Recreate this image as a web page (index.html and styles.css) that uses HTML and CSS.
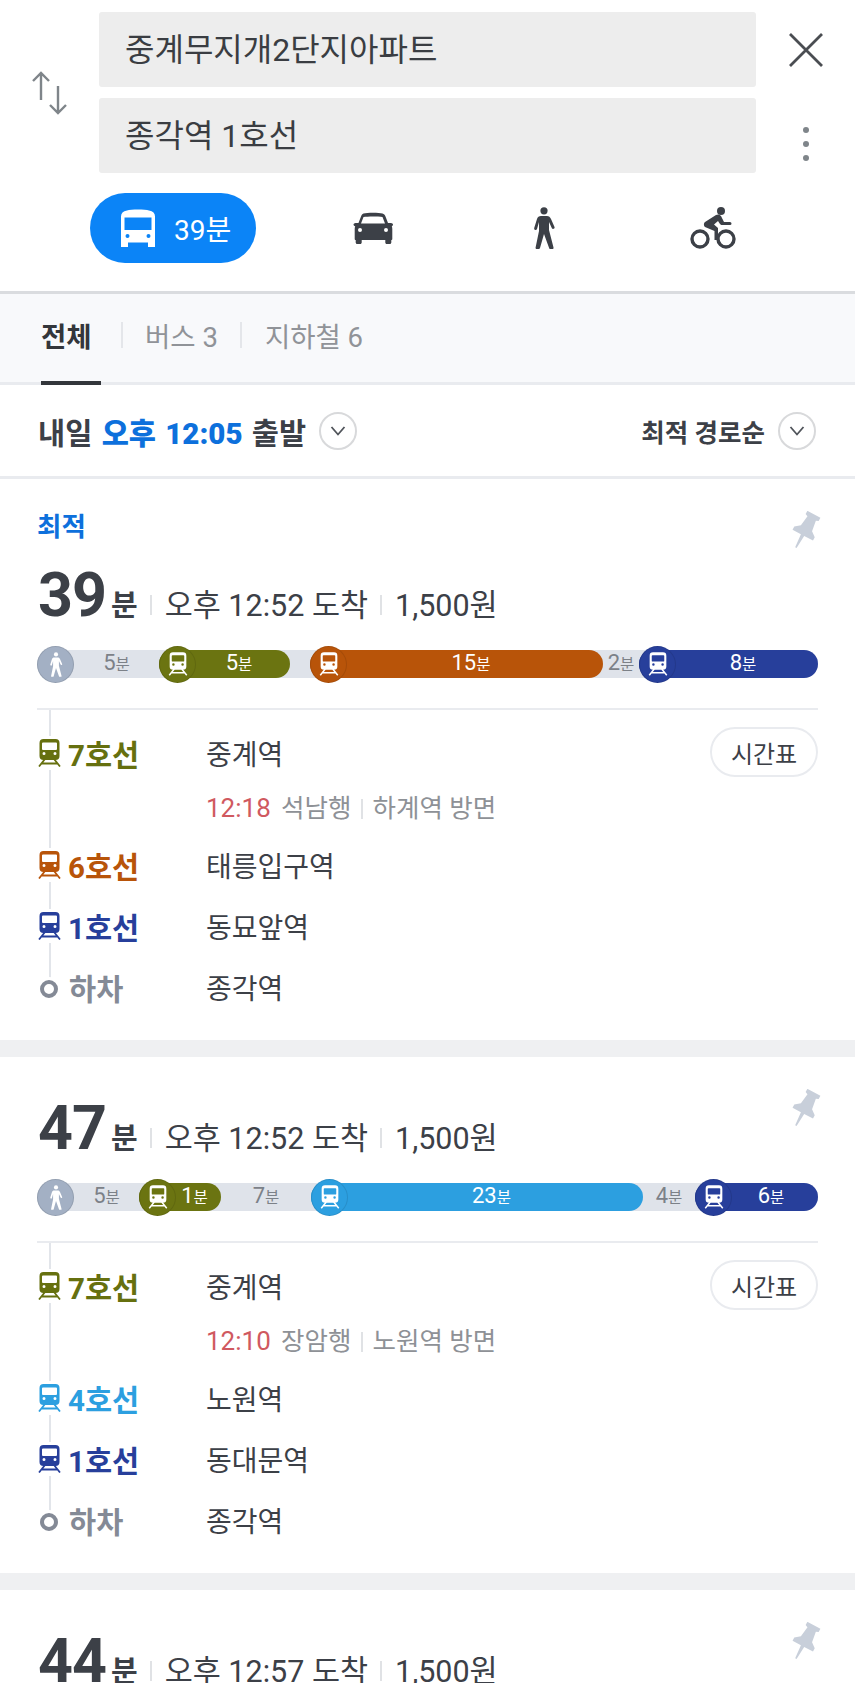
FILE: index.html
```html
<!DOCTYPE html>
<html lang="ko">
<head>
<meta charset="utf-8">
<title>길찾기</title>
<link rel="stylesheet" href="styles.css">
</head>
<body>
<svg class="defs" width="0" height="0" aria-hidden="true">
  <symbol id="train" viewBox="0 0 24 28">
    <path fill="currentColor" fill-rule="evenodd" d="M6 0h12a4 4 0 0 1 4 4v13a4 4 0 0 1-4 4H6a4 4 0 0 1-4-4V4a4 4 0 0 1 4-4zM5.500 3.500a1 1 0 0 0-1 1V10a1 1 0 0 0 1 1h13a1 1 0 0 0 1-1V4.500a1 1 0 0 0-1-1zM6.500 13a1.500 1.500 0 1 0 0 3 1.500 1.500 0 0 0 0-3zM17.500 13a1.500 1.500 0 1 0 0 3 1.500 1.500 0 0 0 0-3z"/>
    <path fill="none" stroke="currentColor" stroke-width="1.800" d="M7.500 20 1.500 27.500M16.500 20l6 7.500M4.500 24.500h15"/>
  </symbol>
  <symbol id="walk" viewBox="0 0 24 42">
    <circle cx="12" cy="3.800" r="3.600" fill="currentColor"/>
    <path fill="currentColor" d="M9 9h6c2 0 3 1 4 3l3.500 8c.3.800 0 1.500-.8 1.800s-1.500 0-1.800-.6L17 15v8l4.500 17.500c.2 1-.3 1.500-1.200 1.500h-2c-.7 0-1-.3-1.200-1L12 27 8 41c-.2.700-.6 1-1.200 1h-2c-1 0-1.400-.6-1.200-1.500L7 24v-9l-2 7c-.3.800-1 1.100-1.800.9S2 22 2.200 21L5 12c.5-2 2-3 4-3z"/>
  </symbol>
  <symbol id="pin" viewBox="0 0 30 38">
    <path fill="currentColor" transform="rotate(28 15 19)" d="M8 1h14v3.500l-2.500 1L21 16l5 4v3.500H16.500L15.500 37h-1.500L13 23.500H4V20l5-4 1.500-10.500L8 4.500z"/>
  </symbol>
  <symbol id="chev" viewBox="0 0 16 10">
    <path fill="none" stroke="currentColor" stroke-width="1.800" d="M1.500 1 8 8.500 14.500 1"/>
  </symbol>
</svg>

<header class="top">
  <div class="search">
    <div class="swap">
      <svg class="swap-icon" viewBox="0 0 37 44"><path fill="none" stroke="currentColor" stroke-width="2.400" d="M10 29V2M2 10l8-8 8 8M27 15v27M19 34l8 8 8-8"/></svg>
    </div>
    <div class="fields">
      <div class="field">중계무지개2단지아파트</div>
      <div class="field">종각역 1호선</div>
    </div>
    <div class="actions">
      <div class="action">
        <svg class="close-icon" viewBox="0 0 34 34"><path fill="none" stroke="currentColor" stroke-width="2.800" d="M1 1l32 32M33 1 1 33"/></svg>
      </div>
      <div class="action action-more">
        <svg class="more-icon" viewBox="0 0 8 36"><circle cx="4" cy="4" r="3" /><circle cx="4" cy="18" r="3"/><circle cx="4" cy="32" r="3"/></svg>
      </div>
    </div>
  </div>
  <div class="modes">
    <div class="mode-pill">
      <svg class="bus-icon" viewBox="0 0 34 38"><path fill="currentColor" fill-rule="evenodd" d="M6 1.500C10 .3 24 .3 28 1.500c4 .6 6 2.500 6 6V38h-7v-4.500H7V38H0V7.500c0-3.500 2-5.400 6-6zM3.500 8.500V21h27V8.500zM6.500 25a2 2 0 1 0 0 4 2 2 0 0 0 0-4zM27.500 25a2 2 0 1 0 0 4 2 2 0 0 0 0-4z"/></svg>
      <span>39분</span>
    </div>
    <svg class="mode-car" viewBox="0 0 40 32"><path fill="currentColor" fill-rule="evenodd" d="M10.500 1.500C14 .5 26 .5 29.500 1.500c1.500.4 2.300 1.400 2.900 2.800L35 11h3c1 0 2 .8 2 1.600 0 .8-.5 1.400-1.200 1.600.3.800.5 1.800.5 2.800v10c0 .7-.5 1-1 1v2.500c0 .8-.6 1.500-1.500 1.500h-3c-.9 0-1.500-.7-1.500-1.500V28H8.700v2.500c0 .8-.6 1.500-1.500 1.500h-3c-.9 0-1.500-.7-1.500-1.500V28c-.5 0-1-.3-1-1V17c0-1 .2-2 .5-2.800C1 14 .5 13.400.5 12.600c0-.8 1-1.600 2-1.600h3l2.600-6.700c.6-1.400 1.100-2.400 2.400-2.800zM10.500 5 8 11.500h24L29.500 5c-4-.8-15-.8-19 0zM7 16a2 2 0 1 0 0 4 2 2 0 0 0 0-4zM33 16a2 2 0 1 0 0 4 2 2 0 0 0 0-4z"/></svg>
    <svg class="mode-walk"><use href="#walk"/></svg>
    <svg class="mode-bike" viewBox="0 0 46 42"><circle cx="10" cy="32" r="8" fill="none" stroke="currentColor" stroke-width="3.400"/><circle cx="36" cy="32" r="8" fill="none" stroke="currentColor" stroke-width="3.400"/><circle cx="31" cy="4" r="4" fill="currentColor"/><path fill="currentColor" d="M15 15 26 8c2-1 4-.5 5 1l3 6h6a1.500 1.500 0 0 1 0 3h-8c-1 0-1.500-.5-2-1l-2-3-4 3.500 4 3.500v12h-3.500v-9L15 20c-1.500-1-1.500-4 0-5z"/></svg>
  </div>
</header>

<nav class="tabs">
  <div class="tab tab-active">전체</div>
  <i class="tab-sep"></i>
  <div class="tab">버스 3</div>
  <i class="tab-sep"></i>
  <div class="tab">지하철 6</div>
</nav>

<section class="filter">
  <div class="filter-item">
    <span class="depart">내일 <b>오후 12:05</b> 출발</span>
    <span class="chev"><svg><use href="#chev"/></svg></span>
  </div>
  <div class="filter-item">
    <span class="sort">최적 경로순</span>
    <span class="chev"><svg><use href="#chev"/></svg></span>
  </div>
</section>

<article class="card card-best">
  <svg class="pin"><use href="#pin"/></svg>
  <div class="tag">최적</div>
  <div class="summary">
    <span class="mins">39</span><span class="mins-unit">분</span><i class="sep"></i><span>오후 12:52 도착</span><i class="sep"></i><span>1,500원</span>
  </div>
  <div class="bar">
    <div class="seg seg-walk" style="width:122px"><span class="dot dot-walk"><svg class="dot-man"><use href="#walk"/></svg></span><span class="time">5<small>분</small></span></div>
    <div class="seg seg-line l7" style="width:131px"><span class="dot"><svg><use href="#train"/></svg></span><span class="time">5<small>분</small></span></div>
    <div class="seg seg-gap" style="width:20px"></div>
    <div class="seg seg-line l6" style="width:293px"><span class="dot"><svg><use href="#train"/></svg></span><span class="time">15<small>분</small></span></div>
    <div class="seg seg-gap" style="width:36px"><span class="time">2<small>분</small></span></div>
    <div class="seg seg-line l1" style="width:179px"><span class="dot"><svg><use href="#train"/></svg></span><span class="time">8<small>분</small></span></div>
  </div>
  <div class="stops">
    <div class="stop"><div class="line l7t"><svg class="line-icon"><use href="#train"/></svg>7호선</div><div class="station">중계역</div><a class="timetable">시간표</a></div>
    <div class="next"><span class="next-time">12:18</span> 석남행<i class="sep sep-small"></i>하계역 방면</div>
    <div class="stop"><div class="line l6t"><svg class="line-icon"><use href="#train"/></svg>6호선</div><div class="station">태릉입구역</div></div>
    <div class="stop"><div class="line l1t"><svg class="line-icon"><use href="#train"/></svg>1호선</div><div class="station">동묘앞역</div></div>
    <div class="stop"><div class="line lend"><span class="end-ring"></span>하차</div><div class="station">종각역</div></div>
  </div>
</article>

<article class="card">
  <svg class="pin"><use href="#pin"/></svg>
  <div class="summary">
    <span class="mins">47</span><span class="mins-unit">분</span><i class="sep"></i><span>오후 12:52 도착</span><i class="sep"></i><span>1,500원</span>
  </div>
  <div class="bar">
    <div class="seg seg-walk" style="width:102px"><span class="dot dot-walk"><svg class="dot-man"><use href="#walk"/></svg></span><span class="time">5<small>분</small></span></div>
    <div class="seg seg-line l7" style="width:82px"><span class="dot"><svg><use href="#train"/></svg></span><span class="time">1<small>분</small></span></div>
    <div class="seg seg-gap" style="width:90px"><span class="time">7<small>분</small></span></div>
    <div class="seg seg-line l4" style="width:332px"><span class="dot"><svg><use href="#train"/></svg></span><span class="time">23<small>분</small></span></div>
    <div class="seg seg-gap" style="width:52px"><span class="time">4<small>분</small></span></div>
    <div class="seg seg-line l1" style="width:123px"><span class="dot"><svg><use href="#train"/></svg></span><span class="time">6<small>분</small></span></div>
  </div>
  <div class="stops">
    <div class="stop"><div class="line l7t"><svg class="line-icon"><use href="#train"/></svg>7호선</div><div class="station">중계역</div><a class="timetable">시간표</a></div>
    <div class="next"><span class="next-time">12:10</span> 장암행<i class="sep sep-small"></i>노원역 방면</div>
    <div class="stop"><div class="line l4t"><svg class="line-icon"><use href="#train"/></svg>4호선</div><div class="station">노원역</div></div>
    <div class="stop"><div class="line l1t"><svg class="line-icon"><use href="#train"/></svg>1호선</div><div class="station">동대문역</div></div>
    <div class="stop"><div class="line lend"><span class="end-ring"></span>하차</div><div class="station">종각역</div></div>
  </div>
</article>

<article class="card">
  <svg class="pin"><use href="#pin"/></svg>
  <div class="summary">
    <span class="mins">44</span><span class="mins-unit">분</span><i class="sep"></i><span>오후 12:57 도착</span><i class="sep"></i><span>1,500원</span>
  </div>
</article>
</body>
</html>
```

FILE: styles.css
```css
* { box-sizing: border-box; }
html, body { margin: 0; height: 100%; overflow: hidden; background: #fff; }
body {
  font-family: Roboto, "Noto Sans CJK KR", sans-serif;
  color: #3c4047;
}
.defs { position: absolute; }
i { font-style: normal; }

/* search header */
.top { padding-top: 12px; border-bottom: 3px solid #dadcdf; padding-bottom: 28px; }
.search { display: grid; grid-template-columns: 99px 657px 1fr; }
.swap { display: flex; align-items: center; justify-content: center; color: #7f858a; }
.swap-icon { width: 37px; height: 44px; }
.fields { display: flex; flex-direction: column; gap: 11px; }
.field {
  height: 75px;
  background: #ededed;
  border-radius: 3px;
  padding: 0 0 5px 26px;
  display: flex;
  align-items: center;
  font-size: 32px;
  color: #3a3d42;
}
.actions { display: flex; flex-direction: column; gap: 11px; }
.action { height: 75px; display: flex; align-items: center; justify-content: center; color: #4a4d52; }
.action-more { padding-top: 16px; }
.close-icon { width: 34px; height: 34px; }
.more-icon { width: 8px; height: 36px; fill: #7f858a; }

.modes { display: flex; align-items: center; margin-top: 20px; padding-left: 90px; color: #3c4047; }
.mode-pill {
  width: 166px;
  height: 70px;
  border-radius: 35px;
  background: #0b84f7;
  color: #fff;
  display: flex;
  align-items: center;
  gap: 19px;
  padding-left: 31px;
  font-size: 28px;
}
.bus-icon { width: 34px; height: 38px; }
.mode-car { width: 40px; height: 32px; margin-left: 97px; }
.mode-walk { width: 24px; height: 42px; margin-left: 139px; }
.mode-bike { width: 46px; height: 42px; margin-left: 134px; }

/* tabs */
.tabs {
  height: 91px;
  background: #f8f9fb;
  border-bottom: 3px solid #e9ebef;
  padding-left: 41px;
  display: flex;
  align-items: stretch;
  font-size: 27.500px;
  color: #909398;
}
.tab { display: flex; align-items: center; padding-bottom: 6px; }
.tab-active {
  width: 60px;
  font-weight: 700;
  color: #33363b;
  border-bottom: 4px solid #33363b;
  margin-bottom: -3px;
}
.tab-sep { width: 2px; height: 26px; background: #e4e6ea; align-self: center; margin: -6px 23px 0 22px; }
.tab-active + .tab-sep { margin-left: 20px; margin-right: 22px; }

/* filter row */
.filter {
  height: 94px;
  border-bottom: 3px solid #e9ebef;
  padding: 0 39px 0 38px;
  display: flex;
  align-items: center;
  justify-content: space-between;
}
.filter-item { display: flex; align-items: center; gap: 13px; }
.depart { font-size: 29.500px; font-weight: 700; word-spacing: 2px; color: #3c4047; }
.depart b { color: #0d70dc; }
.sort { font-size: 25.500px; font-weight: 700; }
.chev {
  width: 38px;
  height: 38px;
  border: 2px solid #d8d9db;
  border-radius: 50%;
  display: flex;
  align-items: center;
  justify-content: center;
  color: #50545a;
}
.chev svg { width: 16px; height: 10px; }

/* route cards */
.card {
  position: relative;
  padding: 41px 37px 0;
  border-bottom: 17px solid #eff0f2;
}
.card-best { padding-top: 30px; }
.pin { position: absolute; top: 32px; right: 34px; width: 32px; height: 40px; color: #c8cfda; }
.tag { height: 36px; margin-bottom: 20px; font-size: 26.500px; font-weight: 700; color: #0d70dc; line-height: 36px; }
.summary { height: 60px; display: flex; align-items: baseline; font-size: 30.500px; color: #3c4047; white-space: nowrap; }
.mins { font-size: 61px; line-height: 60px; font-weight: 700; letter-spacing: -1px; margin-left: 1px; }
.mins-unit { font-size: 29px; font-weight: 700; margin-left: 5px; }
.sep { display: inline-block; width: 2px; height: 20px; background: #e0e2e5; margin: 0 13px 0 12px; }
.summary .sep { align-self: flex-start; margin-top: 30px; }
.next .sep-small { margin: 0 9px 0 10px; height: 20px; vertical-align: -2px; }

.bar {
  display: flex;
  height: 28px;
  margin-top: 25px;
  background: #dfe3ea;
  border-radius: 14px;
}
.seg { display: flex; align-items: center; height: 28px; flex: none; }
.seg-line { border-radius: 14px; color: #fff; padding-right: 8px; }
.seg-walk, .seg-gap { color: #7c8188; }
.dot {
  flex: none;
  width: 37px;
  height: 37px;
  border-radius: 50%;
  display: flex;
  align-items: center;
  justify-content: center;
  color: #fff;
  border: 1.500px solid rgba(0, 0, 0, .1);
  background: inherit;
  background-clip: border-box;
}
.dot svg { width: 20px; height: 24px; }
.dot-walk { background: #a3b0c4; }
.dot .dot-man { width: 14px; height: 25px; }
.time { flex: 1; text-align: center; font-size: 22px; line-height: 28px; white-space: nowrap; }
.time small { font-size: 15.500px; }
.l7 { background: #6b7411; }
.l6 { background: #b85409; }
.l1 { background: #273f9b; }
.l4 { background: #2c9fe0; }

.stops { position: relative; margin-top: 30px; border-top: 2px solid #e9ebef; padding: 12px 0 23px; }
.stops::before {
  content: "";
  position: absolute;
  left: 12px;
  top: 0;
  bottom: 52px;
  width: 2px;
  background: #e2e5ea;
}
.stop { position: relative; display: flex; align-items: center; height: 61px; }
.line {
  width: 169px;
  display: flex;
  align-items: center;
  font-size: 29.500px;
  font-weight: 700;
  white-space: nowrap;
}
.line-icon { width: 25px; height: 28px; margin-right: 6px; }
.line-icon, .end-ring { flex: none; background: #fff; box-shadow: 0 0 0 3px #fff; }
.l7t { color: #66700f; }
.l6t { color: #b85409; }
.l1t { color: #273f9b; }
.l4t { color: #2c9fe0; }
.lend { color: #848a96; }
.end-ring {
  width: 18px;
  height: 18px;
  border: 4px solid #848a96;
  border-radius: 50%;
  margin: 4px 11px 0 3px;
}
.station { font-size: 28px; color: #3c4047; }
.timetable {
  position: absolute;
  right: 0;
  top: 5px;
  width: 108px;
  height: 50px;
  border: 2px solid #e9ebef;
  border-radius: 25px;
  display: flex;
  align-items: center;
  justify-content: center;
  font-size: 24px;
  color: #3c4047;
  background: #fff;
}
.next { height: 51px; padding: 7px 0 0 169px; font-size: 25.500px; line-height: 36px; color: #8e9196; white-space: nowrap; }
.next-time { color: #d0595f; margin-right: 4px; font-size: 26px; }
```
